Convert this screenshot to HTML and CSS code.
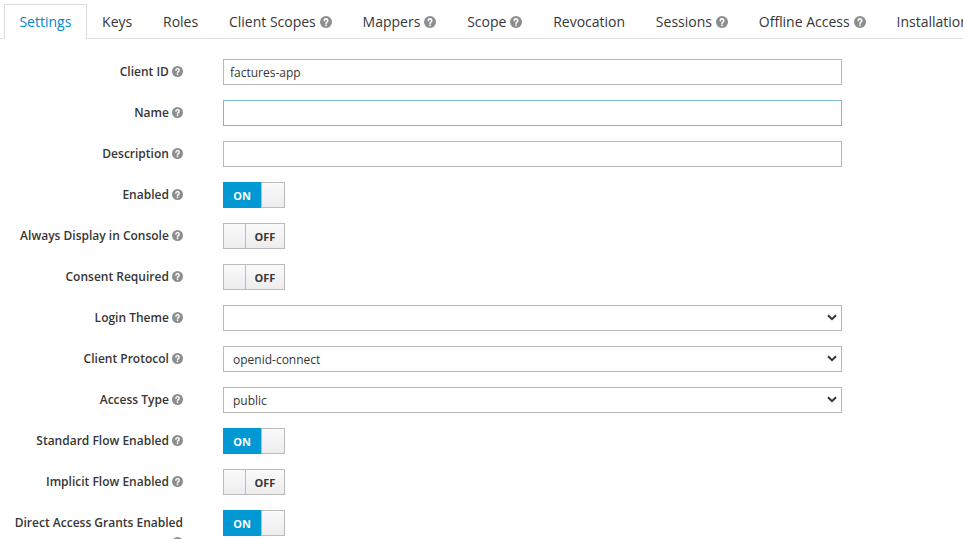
FILE: index.html
```html
<!DOCTYPE html>
<html lang="en">
<head>
<meta charset="utf-8">
<title>Client Settings</title>
<link rel="stylesheet" href="styles.css">
</head>
<body>
<ul class="tabs">
  <li class="tab active">Settings</li>
  <li class="tab">Keys</li>
  <li class="tab">Roles</li>
  <li class="tab">Client Scopes <svg class="help help-lg" viewBox="0 0 12 12"><circle cx="6" cy="6" r="6"/><path d="M4.3 4.6a1.75 1.75 0 1 1 2.6 1.5c-.6.35-.9.6-.9 1.3v.2"/><circle class="dot" cx="6" cy="9.3" r=".9"/></svg></li>
  <li class="tab">Mappers <svg class="help help-lg" viewBox="0 0 12 12"><circle cx="6" cy="6" r="6"/><path d="M4.3 4.6a1.75 1.75 0 1 1 2.6 1.5c-.6.35-.9.6-.9 1.3v.2"/><circle class="dot" cx="6" cy="9.3" r=".9"/></svg></li>
  <li class="tab">Scope <svg class="help help-lg" viewBox="0 0 12 12"><circle cx="6" cy="6" r="6"/><path d="M4.3 4.6a1.75 1.75 0 1 1 2.6 1.5c-.6.35-.9.6-.9 1.3v.2"/><circle class="dot" cx="6" cy="9.3" r=".9"/></svg></li>
  <li class="tab">Revocation</li>
  <li class="tab">Sessions <svg class="help help-lg" viewBox="0 0 12 12"><circle cx="6" cy="6" r="6"/><path d="M4.3 4.6a1.75 1.75 0 1 1 2.6 1.5c-.6.35-.9.6-.9 1.3v.2"/><circle class="dot" cx="6" cy="9.3" r=".9"/></svg></li>
  <li class="tab">Offline Access <svg class="help help-lg" viewBox="0 0 12 12"><circle cx="6" cy="6" r="6"/><path d="M4.3 4.6a1.75 1.75 0 1 1 2.6 1.5c-.6.35-.9.6-.9 1.3v.2"/><circle class="dot" cx="6" cy="9.3" r=".9"/></svg></li>
  <li class="tab">Installation</li>
</ul>

<form class="form">
  <div class="row">
    <label class="label">Client ID <svg class="help" viewBox="0 0 12 12"><circle cx="6" cy="6" r="6"/><path d="M4.3 4.6a1.75 1.75 0 1 1 2.6 1.5c-.6.35-.9.6-.9 1.3v.2"/><circle class="dot" cx="6" cy="9.3" r=".9"/></svg></label>
    <input class="input" type="text" value="factures-app">
  </div>
  <div class="row">
    <label class="label">Name <svg class="help" viewBox="0 0 12 12"><circle cx="6" cy="6" r="6"/><path d="M4.3 4.6a1.75 1.75 0 1 1 2.6 1.5c-.6.35-.9.6-.9 1.3v.2"/><circle class="dot" cx="6" cy="9.3" r=".9"/></svg></label>
    <input class="input focus" type="text" value="">
  </div>
  <div class="row">
    <label class="label">Description <svg class="help" viewBox="0 0 12 12"><circle cx="6" cy="6" r="6"/><path d="M4.3 4.6a1.75 1.75 0 1 1 2.6 1.5c-.6.35-.9.6-.9 1.3v.2"/><circle class="dot" cx="6" cy="9.3" r=".9"/></svg></label>
    <input class="input" type="text" value="">
  </div>
  <div class="row">
    <label class="label">Enabled <svg class="help" viewBox="0 0 12 12"><circle cx="6" cy="6" r="6"/><path d="M4.3 4.6a1.75 1.75 0 1 1 2.6 1.5c-.6.35-.9.6-.9 1.3v.2"/><circle class="dot" cx="6" cy="9.3" r=".9"/></svg></label>
    <div class="switch on"><span class="sw-label">ON</span><span class="sw-handle"></span></div>
  </div>
  <div class="row">
    <label class="label">Always Display in Console <svg class="help" viewBox="0 0 12 12"><circle cx="6" cy="6" r="6"/><path d="M4.3 4.6a1.75 1.75 0 1 1 2.6 1.5c-.6.35-.9.6-.9 1.3v.2"/><circle class="dot" cx="6" cy="9.3" r=".9"/></svg></label>
    <div class="switch off"><span class="sw-handle"></span><span class="sw-label">OFF</span></div>
  </div>
  <div class="row">
    <label class="label">Consent Required <svg class="help" viewBox="0 0 12 12"><circle cx="6" cy="6" r="6"/><path d="M4.3 4.6a1.75 1.75 0 1 1 2.6 1.5c-.6.35-.9.6-.9 1.3v.2"/><circle class="dot" cx="6" cy="9.3" r=".9"/></svg></label>
    <div class="switch off"><span class="sw-handle"></span><span class="sw-label">OFF</span></div>
  </div>
  <div class="row">
    <label class="label">Login Theme <svg class="help" viewBox="0 0 12 12"><circle cx="6" cy="6" r="6"/><path d="M4.3 4.6a1.75 1.75 0 1 1 2.6 1.5c-.6.35-.9.6-.9 1.3v.2"/><circle class="dot" cx="6" cy="9.3" r=".9"/></svg></label>
    <div class="select-wrap">
      <select class="select"><option></option></select>
      <svg class="chev" viewBox="0 0 10 7"><path d="M1 1.2l4 4 4-4"/></svg>
    </div>
  </div>
  <div class="row">
    <label class="label">Client Protocol <svg class="help" viewBox="0 0 12 12"><circle cx="6" cy="6" r="6"/><path d="M4.3 4.6a1.75 1.75 0 1 1 2.6 1.5c-.6.35-.9.6-.9 1.3v.2"/><circle class="dot" cx="6" cy="9.3" r=".9"/></svg></label>
    <div class="select-wrap">
      <select class="select"><option>openid-connect</option></select>
      <svg class="chev" viewBox="0 0 10 7"><path d="M1 1.2l4 4 4-4"/></svg>
    </div>
  </div>
  <div class="row">
    <label class="label">Access Type <svg class="help" viewBox="0 0 12 12"><circle cx="6" cy="6" r="6"/><path d="M4.3 4.6a1.75 1.75 0 1 1 2.6 1.5c-.6.35-.9.6-.9 1.3v.2"/><circle class="dot" cx="6" cy="9.3" r=".9"/></svg></label>
    <div class="select-wrap">
      <select class="select"><option>public</option></select>
      <svg class="chev" viewBox="0 0 10 7"><path d="M1 1.2l4 4 4-4"/></svg>
    </div>
  </div>
  <div class="row">
    <label class="label">Standard Flow Enabled <svg class="help" viewBox="0 0 12 12"><circle cx="6" cy="6" r="6"/><path d="M4.3 4.6a1.75 1.75 0 1 1 2.6 1.5c-.6.35-.9.6-.9 1.3v.2"/><circle class="dot" cx="6" cy="9.3" r=".9"/></svg></label>
    <div class="switch on"><span class="sw-label">ON</span><span class="sw-handle"></span></div>
  </div>
  <div class="row">
    <label class="label">Implicit Flow Enabled <svg class="help" viewBox="0 0 12 12"><circle cx="6" cy="6" r="6"/><path d="M4.3 4.6a1.75 1.75 0 1 1 2.6 1.5c-.6.35-.9.6-.9 1.3v.2"/><circle class="dot" cx="6" cy="9.3" r=".9"/></svg></label>
    <div class="switch off"><span class="sw-handle"></span><span class="sw-label">OFF</span></div>
  </div>
  <div class="row">
    <label class="label">Direct Access Grants Enabled <svg class="help" viewBox="0 0 12 12"><circle cx="6" cy="6" r="6"/><path d="M4.3 4.6a1.75 1.75 0 1 1 2.6 1.5c-.6.35-.9.6-.9 1.3v.2"/><circle class="dot" cx="6" cy="9.3" r=".9"/></svg></label>
    <div class="switch on"><span class="sw-label">ON</span><span class="sw-handle"></span></div>
  </div>
</form>
</body>
</html>
```

FILE: styles.css
```css
* { box-sizing: border-box; }

html, body {
  margin: 0;
  padding: 0;
  background: #fff;
  overflow: hidden;
}

body {
  font-family: "Open Sans", "Liberation Sans", sans-serif;
  font-size: 12px;
  color: #363636;
  width: 963px;
  height: 539px;
}

.tabs {
  list-style: none;
  margin: 0;
  padding: 4px 0 0 4px;
  display: flex;
  white-space: nowrap;
  border-bottom: 1px solid #e0e0e0;
  height: 39px;
}

.tab {
  flex: none;
  height: 35px;
  padding: 0 14.4px;
  font-size: 14px;
  line-height: 34px;
  color: #363636;
  border: 1px solid transparent;
  border-bottom: none;
  display: flex;
  align-items: center;
  gap: 4px;
}

.tab.active {
  color: #0088ce;
  border-color: #dcdcdc;
  background: #fff;
  height: 35px;
  margin-bottom: -1px;
}

.help {
  width: 11px;
  height: 11px;
  flex: none;
  vertical-align: -1px;
}
.help circle { fill: #8b8d8f; }
.help path {
  fill: none;
  stroke: #fff;
  stroke-width: 1.6;
  stroke-linecap: round;
}
.help circle.dot { fill: #fff; }
.help-lg { width: 12px; height: 12px; }

.form {
  margin: 20px 0 0 0;
  display: flex;
  flex-direction: column;
  gap: 15px;
}

.row {
  display: flex;
  align-items: flex-start;
  gap: 40px;
}

.label {
  width: 183px;
  padding-left: 14px;
  padding-top: 3px;
  text-align: right;
  font-weight: 600;
  line-height: 20px;
  flex: none;
}

.input {
  width: 619px;
  height: 26px;
  border: 1px solid #bababa;
  padding: 2px 6px;
  font-family: inherit;
  font-size: 12px;
  color: #363636;
  outline: none;
  background: #fff;
}

.input.focus {
  border-color: #7eb7d9;
}

.select-wrap {
  position: relative;
  width: 619px;
  height: 26px;
}

.select {
  appearance: none;
  -webkit-appearance: none;
  width: 100%;
  height: 26px;
  border: 1px solid #bababa;
  border-radius: 0;
  background: #fff;
  padding: 2px 6px 2px 9px;
  font-family: inherit;
  font-size: 12px;
  color: #363636;
  outline: none;
}

.chev {
  position: absolute;
  right: 5px;
  top: 9px;
  width: 10px;
  height: 7px;
  pointer-events: none;
}
.chev path {
  fill: none;
  stroke: #333;
  stroke-width: 2;
}

.switch {
  display: flex;
  width: 62px;
  height: 26px;
  border: 1px solid #bbb;
  flex: none;
}

.sw-label {
  font-size: 11px;
  font-weight: 700;
  display: flex;
  align-items: center;
  justify-content: center;
}

.switch.on .sw-label {
  width: 38px;
  background: #0099d3;
  color: #fff;
  margin: -1px 0 -1px -1px;
}

.switch.off .sw-label {
  flex: 1;
  color: #363636;
  background: linear-gradient(#fafafa, #ededed);
}

.sw-handle {
  flex: 1;
  background: linear-gradient(#fafafa, #ededed);
}

.switch.off .sw-handle {
  flex: none;
  width: 22px;
  border-right: 1px solid #bbb;
}

.switch.on .sw-handle {
  border-left: 1px solid #bbb;
}
```
